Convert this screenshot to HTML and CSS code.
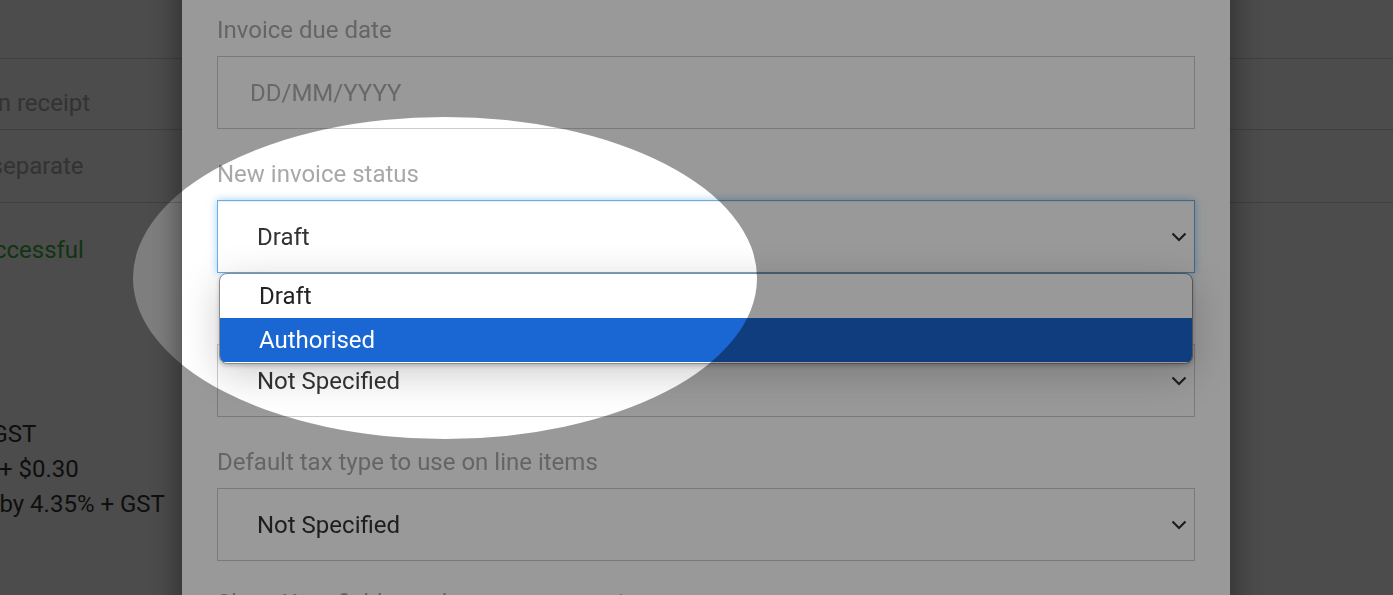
FILE: index.html
```html
<!DOCTYPE html>
<html lang="en">
<head>
    <meta charset="UTF-8">
    <meta name="viewport" content="width=device-width, initial-scale=1.0">
    <title>Payment settings</title>
    <link rel="stylesheet" href="styles.css">
</head>
<body>
    <!-- pagina din spate, acoperita de modal -->
    <div class="page">
        <div class="page-row page-head"></div>
        <div class="page-row row-one">Include surcharge on receipt</div>
        <div class="page-row row-two">Show surcharge in separate</div>
        <div class="page-block">
            <div class="status-ok">Connection test: successful</div>
            <div class="fee-list">
                <div>Debit cards 1.5% + GST</div>
                <div>Credit cards: 1.75% + $0.30</div>
                <div>International raised by 4.35% + GST</div>
            </div>
        </div>
    </div>

    <div class="backdrop"></div>

    <div class="modal">
        <div class="field">
            <label class="field-label">Invoice due date</label>
            <div class="control input-box">
                <span class="placeholder">DD/MM/YYYY</span>
            </div>
        </div>

        <div class="field">
            <label class="field-label">New invoice status</label>
            <div class="select-wrap">
                <div class="control select-box focused">
                    <span>Draft</span>
                    <svg class="chevron" width="16" height="10" viewBox="0 0 16 10"><path d="M1.5 1.5l6.5 6.5 6.5-6.5" fill="none" stroke="#333" stroke-width="2.2"/></svg>
                </div>
                <div class="dropdown">
                    <div class="option">Draft</div>
                    <div class="option selected">Authorised</div>
                </div>
            </div>
        </div>

        <div class="field">
            <label class="field-label">Invoice branding theme</label>
            <div class="control select-box">
                <span>Not Specified</span>
                <svg class="chevron" width="16" height="10" viewBox="0 0 16 10"><path d="M1.5 1.5l6.5 6.5 6.5-6.5" fill="none" stroke="#333" stroke-width="2.2"/></svg>
            </div>
        </div>

        <div class="field">
            <label class="field-label">Default tax type to use on line items</label>
            <div class="control select-box">
                <span>Not Specified</span>
                <svg class="chevron" width="16" height="10" viewBox="0 0 16 10"><path d="M1.5 1.5l6.5 6.5 6.5-6.5" fill="none" stroke="#333" stroke-width="2.2"/></svg>
            </div>
        </div>

        <div class="field last-field">
            <label class="field-label">Show Xero fields on the payment receipt page</label>
            <div class="control select-box">
                <span>Not Specified</span>
            </div>
        </div>
    </div>

    <!-- spotul luminos peste select -->
    <div class="spotlight"></div>
</body>
</html>
```

FILE: styles.css
```css
body {
    margin: 0;
    height: 595px;
    overflow: hidden;
    background-color: #fff;
    font-family: Roboto, 'Noto Sans', sans-serif;
    color: #333;
}

.page {
    margin-left: -212px;
    font-size: 24px;
    line-height: 35px;
    color: #aaa;
    white-space: nowrap;
}

.page-row {
    border-bottom: 1px solid #d4d4d4;
    box-sizing: border-box;
}

.page-head {
    height: 59px;
}

.row-one {
    height: 71px;
    padding-top: 27px;
}

.row-two {
    height: 73px;
    padding-top: 19px;
}

.page-block {
    padding-top: 30px;
}

.status-ok {
    color: #3cb043;
}

.fee-list {
    margin-top: 149px;
    color: #333;
}

.backdrop {
    position: fixed;
    top: 0;
    left: 0;
    right: 0;
    bottom: 0;
    background: rgba(0, 0, 0, 0.5);
    z-index: 1;
}

.modal {
    position: absolute;
    top: -44px;
    left: 182px;
    width: 1048px;
    height: 700px;
    box-sizing: border-box;
    padding: 60px 35px 0;
    background: #fff;
    box-shadow: 0 5px 30px rgba(0, 0, 0, 0.5);
    z-index: 2;
}

.field {
    margin-bottom: 31px;
}

.last-field .field-label {
    margin-top: -3px;
}

.field-label {
    display: block;
    font-size: 24px;
    line-height: 28px;
    margin-bottom: 12px;
    color: #a8a8a8;
    white-space: nowrap;
}

.control {
    height: 73px;
    box-sizing: border-box;
    border: 1px solid #ccc;
    font-size: 24px;
    display: flex;
    align-items: center;
}

.input-box {
    padding-left: 32px;
}

.placeholder {
    color: #adadad;
}

.select-box {
    justify-content: space-between;
    padding: 0 7px 0 39px;
    color: #333;
}

.select-box.focused {
    border-color: #66afe9;
    box-shadow: inset 0 1px 1px rgba(0, 0, 0, 0.075), 0 0 8px rgba(102, 175, 233, 0.6);
}

.select-wrap {
    position: relative;
}

.dropdown {
    position: absolute;
    top: 100%;
    left: 2px;
    right: 2px;
    background: #fff;
    border: 1px solid #8c8c8c;
    border-radius: 8px;
    overflow: hidden;
    padding-bottom: 1px;
    box-shadow: 0 10px 40px rgba(0, 0, 0, 0.2), 0 2px 4px rgba(0, 0, 0, 0.2);
    z-index: 5;
}

.option {
    height: 44px;
    line-height: 44px;
    padding-left: 39px;
    font-size: 24px;
    color: #222;
}

.option.selected {
    background: #1a67d3;
    color: #fff;
}

.spotlight {
    position: absolute;
    left: 133px;
    top: 117px;
    width: 624px;
    height: 322px;
    border-radius: 50%;
    box-shadow: 0 0 0 2000px rgba(0, 0, 0, 0.4);
    pointer-events: none;
    z-index: 10;
}
```
